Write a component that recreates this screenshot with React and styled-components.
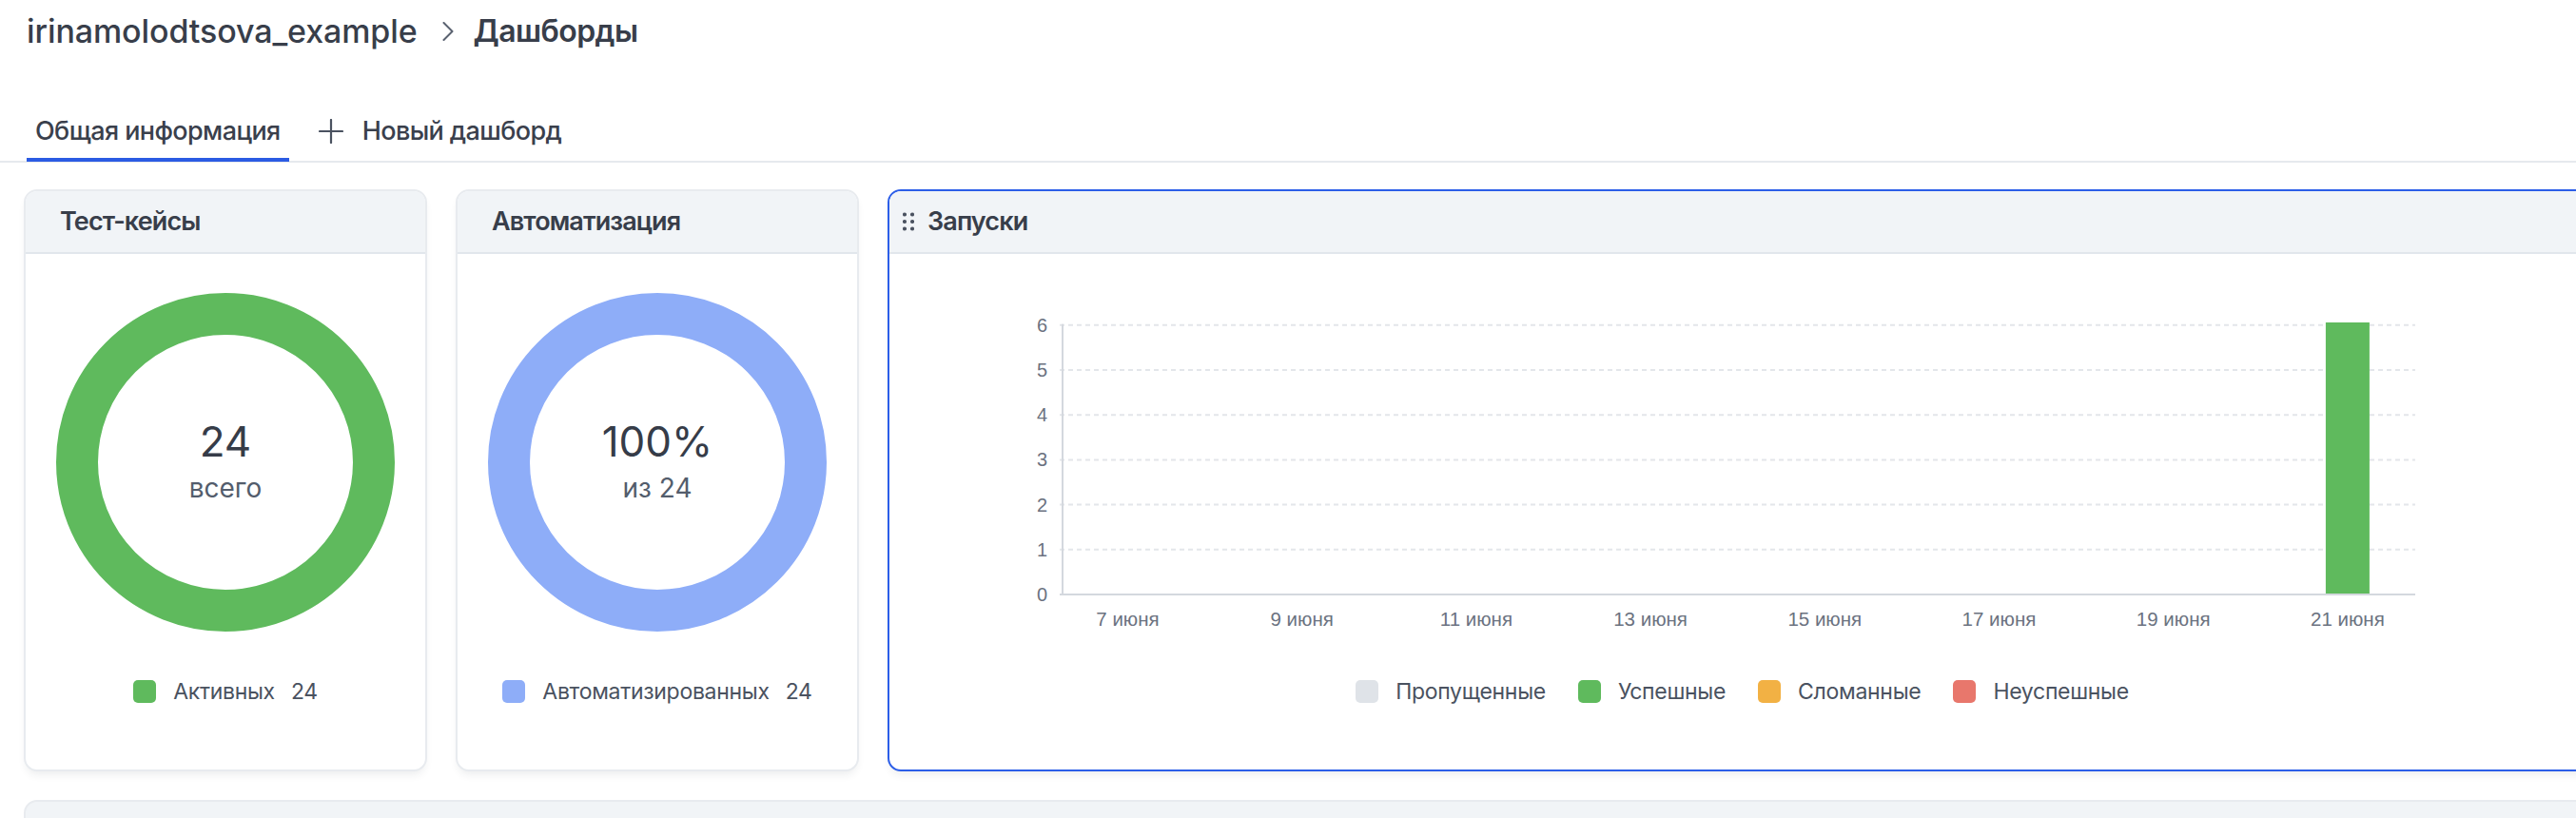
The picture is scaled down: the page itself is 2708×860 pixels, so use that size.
import React from "react";
import styled, { createGlobalStyle } from "styled-components";

const GlobalStyle = createGlobalStyle`
  html, body {
    margin: 0;
    padding: 0;
    background: #ffffff;
    overflow: hidden;
    height: 860px;
  }
  body {
    font-family: Inter, "Noto Sans", sans-serif;
    color: #373d49;
  }
  * { box-sizing: border-box; }
`;

const Page = styled.div`
  width: 2755px;
  padding-top: 13px;
`;

const Breadcrumbs = styled.div`
  display: flex;
  align-items: center;
  padding-left: 28px;
  height: 40px;
  line-height: 40px;
`;

const Crumb = styled.span`
  font-size: ${(p) => (p.$current ? "32px" : "34px")};
  font-weight: ${(p) => (p.$current ? 600 : 500)};
  color: #383e4a;
  letter-spacing: ${(p) => (p.$current ? "-0.6px" : "-0.1px")};
`;

const ChevronBox = styled.span`
  display: inline-flex;
  margin: 0 21px 0 26px;
  color: #5a6270;
`;

const TabBar = styled.div`
  display: flex;
  align-items: flex-end;
  gap: 22px;
  margin-top: 65px;
  padding-left: 28px;
  border-bottom: 2px solid #e6e9ee;
`;

const Tab = styled.div`
  display: flex;
  align-items: center;
  gap: 20px;
  padding: 0 9px 8px;
  font-size: 27px;
  line-height: 40px;
  font-weight: 500;
  letter-spacing: -0.6px;
  color: #3a404c;
  border-bottom: 4px solid ${(p) => (p.$active ? "#2b5be3" : "transparent")};
  margin-bottom: -1px;
`;

const Grid = styled.div`
  display: grid;
  grid-template-columns: 424px 424px 1fr;
  gap: 30px;
  padding: 0 25px;
  margin-top: 28px;
`;

const Card = styled.section`
  display: flex;
  flex-direction: column;
  background: #ffffff;
  border: 2px solid ${(p) => (p.$selected ? "#2c5ee8" : "#e8ebef")};
  border-radius: 14px;
  overflow: hidden;
  box-shadow: 0 6px 10px -3px rgba(30, 40, 60, 0.09);
`;

const CardHeader = styled.header`
  display: flex;
  align-items: center;
  gap: 14px;
  height: 66px;
  padding-left: ${(p) => (p.$handle ? "14px" : "36px")};
  background: #f1f4f7;
  border-bottom: 2px solid #e1e6ec;
`;

const CardTitle = styled.h2`
  margin: 0;
  font-size: 27px;
  line-height: 64px;
  font-weight: 600;
  letter-spacing: -0.9px;
  color: #383e4a;
`;

const DonutBody = styled.div`
  display: flex;
  flex-direction: column;
  align-items: center;
  padding: 41px 0 70px;
`;

const DonutWrap = styled.div`
  position: relative;
  width: 356px;
  height: 356px;
`;

const DonutCenter = styled.div`
  position: absolute;
  inset: 0;
  display: flex;
  flex-direction: column;
  align-items: center;
  justify-content: center;
  gap: 9px;
`;

const BigNumber = styled.div`
  font-size: 44px;
  line-height: 44px;
  font-weight: 400;
  color: #363c48;
`;

const SubLabel = styled.div`
  font-size: 28px;
  line-height: 36px;
  color: #535d6c;
`;

const Legend = styled.div`
  display: flex;
  align-items: center;
  justify-content: center;
  gap: ${(p) => p.$gap || 34}px;
  margin-top: ${(p) => p.$top || 51}px;
  height: 24px;
`;

const LegendItem = styled.div`
  display: flex;
  align-items: center;
  font-size: 23px;
  line-height: 24px;
  letter-spacing: -0.3px;
  color: #4a5260;
`;

const Swatch = styled.span`
  width: 24px;
  height: 24px;
  border-radius: 5px;
  background: ${(p) => p.$color};
  margin-right: 18px;
  flex: none;
`;

const Count = styled.span`
  margin-left: 17px;
`;

const ChartBody = styled.div`
  display: flex;
  flex-direction: column;
  padding: 52px 0 70px;
`;

const ChartBox = styled.div`
  padding-left: 126px;
  height: 350px;
`;

const NextCard = styled.section`
  grid-column: 1 / -1;
  height: 200px;
  background: #f1f4f7;
  border: 2px solid #e8ebef;
  border-radius: 14px;
`;

const Chevron = () => (
  <svg width="12" height="20" viewBox="0 0 12 20" fill="none">
    <polyline points="1.5,1 10.5,10 1.5,19" stroke="currentColor" strokeWidth="2" strokeLinecap="round" strokeLinejoin="round" />
  </svg>
);

const PlusIcon = () => (
  <svg width="26" height="26" viewBox="0 0 26 26" fill="none">
    <line x1="13" y1="1" x2="13" y2="25" stroke="#4a5260" strokeWidth="2.2" strokeLinecap="round" />
    <line x1="1" y1="13" x2="25" y2="13" stroke="#4a5260" strokeWidth="2.2" strokeLinecap="round" />
  </svg>
);

const DragHandle = () => (
  <svg width="12" height="20" viewBox="0 0 12 20" fill="#4a5260">
    {[2.5, 10, 17.5].map((y) =>
      [2, 10].map((x) => <circle key={`${x}-${y}`} cx={x} cy={y} r="2.1" />)
    )}
  </svg>
);

const Donut = ({ color, value, label }) => (
  <DonutWrap>
    <svg width="356" height="356" viewBox="0 0 356 356">
      <circle cx="178" cy="178" r="156" fill="none" stroke={color} strokeWidth="44" />
    </svg>
    <DonutCenter>
      <BigNumber>{value}</BigNumber>
      <SubLabel>{label}</SubLabel>
    </DonutCenter>
  </DonutWrap>
);

const GREEN = "#5fba5d";
const BLUE = "#8eadf8";

const days = [7, 9, 11, 13, 15, 17, 19, 21];
const xOf = (d) => 124.5 + (d - 7) * 91.6;
const yOf = (v) => 306 - v * 47.2;
const tickFont = "'Liberation Sans', Arial, sans-serif";

const RunsChart = () => (
  <svg width="1500" height="350" viewBox="0 0 1500 350">
    {[1, 2, 3, 4, 5, 6].map((v) => (
      <line key={v} x1="53" x2="1478" y1={yOf(v)} y2={yOf(v)} stroke="#e3e6ea" strokeWidth="2" strokeDasharray="5 4" />
    ))}
    <line x1="56" x2="56" y1={yOf(6) - 1} y2="307" stroke="#d4d8de" strokeWidth="2" />
    <rect x={xOf(21) - 23} y="20" width="46" height="286" fill={GREEN} />
    <line x1="53" x2="1478" y1="306" y2="306" stroke="#d4d8de" strokeWidth="2" />
    {[0, 1, 2, 3, 4, 5, 6].map((v) => (
      <text key={v} x="40" y={yOf(v)} textAnchor="end" dominantBaseline="central" fontFamily={tickFont} fontSize="20" fill="#6b7280">
        {v}
      </text>
    ))}
    {days.map((d) => (
      <text key={d} x={xOf(d)} y="331" textAnchor="middle" dominantBaseline="central" fontFamily={tickFont} fontSize="20.5" fill="#6b7280">
        {d} июня
      </text>
    ))}
  </svg>
);

export default function App() {
  return (
    <Page>
      <GlobalStyle />
      <Breadcrumbs>
        <Crumb>irinamolodtsova_example</Crumb>
        <ChevronBox>
          <Chevron />
        </ChevronBox>
        <Crumb $current>Дашборды</Crumb>
      </Breadcrumbs>

      <TabBar>
        <Tab $active>Общая информация</Tab>
        <Tab>
          <PlusIcon />
          Новый дашборд
        </Tab>
      </TabBar>

      <Grid>
        <Card>
          <CardHeader>
            <CardTitle>Тест-кейсы</CardTitle>
          </CardHeader>
          <DonutBody>
            <Donut color={GREEN} value="24" label="всего" />
            <Legend>
              <LegendItem>
                <Swatch $color={GREEN} />
                Активных
                <Count>24</Count>
              </LegendItem>
            </Legend>
          </DonutBody>
        </Card>

        <Card>
          <CardHeader>
            <CardTitle>Автоматизация</CardTitle>
          </CardHeader>
          <DonutBody>
            <Donut color={BLUE} value="100%" label="из 24" />
            <Legend>
              <LegendItem>
                <Swatch $color={BLUE} />
                Автоматизированных
                <Count>24</Count>
              </LegendItem>
            </Legend>
          </DonutBody>
        </Card>

        <Card $selected>
          <CardHeader $handle>
            <DragHandle />
            <CardTitle>Запуски</CardTitle>
          </CardHeader>
          <ChartBody>
            <ChartBox>
              <RunsChart />
            </ChartBox>
            <Legend $top={46}>
              <LegendItem>
                <Swatch $color="#dfe3e8" />
                Пропущенные
              </LegendItem>
              <LegendItem>
                <Swatch $color={GREEN} />
                Успешные
              </LegendItem>
              <LegendItem>
                <Swatch $color="#f2b144" />
                Сломанные
              </LegendItem>
              <LegendItem>
                <Swatch $color="#e8776c" />
                Неуспешные
              </LegendItem>
            </Legend>
          </ChartBody>
        </Card>

        <NextCard />
      </Grid>
    </Page>
  );
}
